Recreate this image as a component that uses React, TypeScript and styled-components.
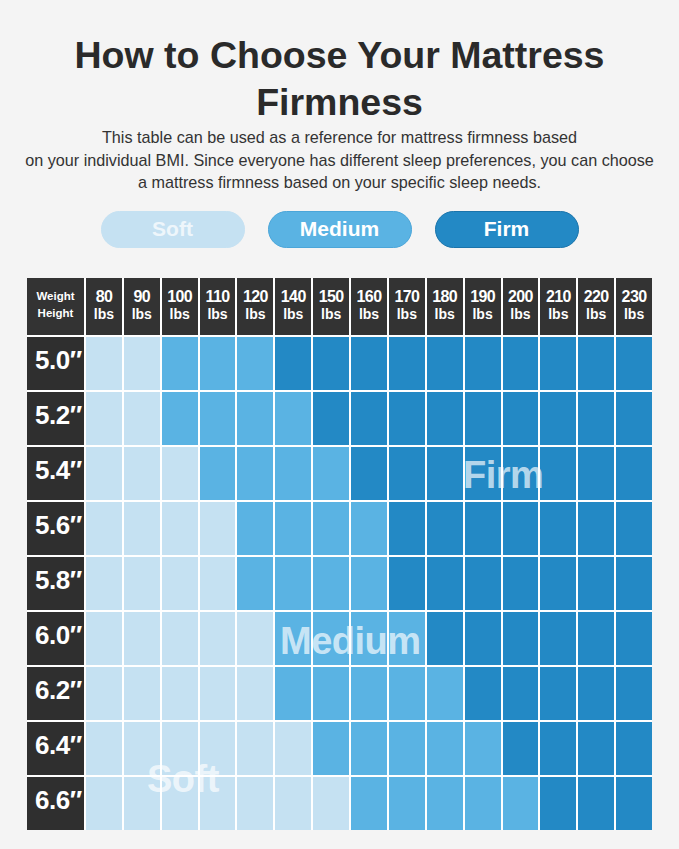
import React from "react";
import styled, { createGlobalStyle } from "styled-components";

const GlobalStyle = createGlobalStyle`
  html, body { margin: 0; padding: 0; background: #f4f4f4; }
  body { font-family: "Liberation Sans", Arial, Helvetica, sans-serif; }
`;

const SOFT = "#c5e1f2";
const MEDIUM = "#5ab3e3";
const FIRM = "#2389c5";

const Page = styled.div`
  width: 679px;
  min-height: 849px;
  padding-top: 32px;
  box-sizing: border-box;
  display: flex;
  flex-direction: column;
  align-items: center;
`;

const Title = styled.h1`
  margin: 0;
  font-size: 37.5px;
  line-height: 47px;
  font-weight: 700;
  color: #2a2a2a;
  text-align: center;
`;

const Subtitle = styled.p`
  margin: 0;
  font-size: 16.2px;
  line-height: 22.5px;
  color: #333;
  text-align: center;
`;

const PillRow = styled.div`
  display: flex;
  gap: 23px;
  margin-top: 17px;
`;

const Pill = styled.div<{ $bg: string; $border: string; $fg: string }>`
  width: 144px;
  height: 37px;
  box-sizing: border-box;
  border-radius: 19px;
  background: ${(p) => p.$bg};
  border: 1px solid ${(p) => p.$border};
  color: ${(p) => p.$fg};
  font-size: 21px;
  font-weight: 700;
  display: flex;
  align-items: center;
  justify-content: center;
`;

const TableWrap = styled.div`
  position: relative;
  margin-top: 30px;
`;

const Grid = styled.div`
  width: 625px;
  display: grid;
  grid-template-columns: 57px repeat(15, 1fr);
  grid-template-rows: 57px repeat(9, 53px);
  gap: 2px;
  background: #ffffff;
`;

const HeadCell = styled.div`
  background: #333333;
  color: #fff;
  font-weight: 700;
  display: flex;
  flex-direction: column;
  align-items: center;
  justify-content: center;
  padding-bottom: 2px;
`;

const CornerText = styled.span`
  font-size: 11.5px;
  line-height: 17px;
`;

const Num = styled.span`
  font-size: 16px;
  line-height: 19px;
  letter-spacing: -0.6px;
`;

const Unit = styled.span`
  font-size: 14px;
  line-height: 17px;
`;

const RowLabel = styled.div`
  background: #2f2f2f;
  color: #fff;
  font-weight: 700;
  font-size: 26px;
  display: flex;
  align-items: center;
  padding: 0 0 5px 8px;
  box-sizing: border-box;
  letter-spacing: -0.5px;
`;

const Cell = styled.div<{ $bg: string }>`
  background: ${(p) => p.$bg};
`;

const Overlay = styled.span<{ $x: number; $y: number }>`
  position: absolute;
  left: ${(p) => p.$x}px;
  top: ${(p) => p.$y}px;
  font-size: 38px;
  line-height: 1;
  font-weight: 700;
  color: rgba(255, 255, 255, 0.68);
  pointer-events: none;
  letter-spacing: -0.5px;
`;

const weights = [80, 90, 100, 110, 120, 140, 150, 160, 170, 180, 190, 200, 210, 220, 230];

const rows: { h: string; m: number; f: number }[] = [
  { h: "5.0", m: 2, f: 5 },
  { h: "5.2", m: 2, f: 6 },
  { h: "5.4", m: 3, f: 7 },
  { h: "5.6", m: 4, f: 8 },
  { h: "5.8", m: 4, f: 8 },
  { h: "6.0", m: 5, f: 9 },
  { h: "6.2", m: 5, f: 10 },
  { h: "6.4", m: 6, f: 11 },
  { h: "6.6", m: 7, f: 12 },
];

export default function App() {
  return (
    <>
      <GlobalStyle />
      <Page>
        <Title>
          How to Choose Your Mattress
          <br />
          Firmness
        </Title>
        <Subtitle>
          This table can be used as a reference for mattress firmness based
          <br />
          on your individual BMI. Since everyone has different sleep preferences, you can choose
          <br />
          a mattress firmness based on your specific sleep needs.
        </Subtitle>
        <PillRow>
          <Pill $bg={SOFT} $border={SOFT} $fg="#eef6fb">Soft</Pill>
          <Pill $bg={MEDIUM} $border="#4ba6d9" $fg="#ffffff">Medium</Pill>
          <Pill $bg={FIRM} $border="#1a74ab" $fg="#ffffff">Firm</Pill>
        </PillRow>
        <TableWrap>
          <Grid>
            <HeadCell>
              <CornerText>Weight</CornerText>
              <CornerText>Height</CornerText>
            </HeadCell>
            {weights.map((w) => (
              <HeadCell key={w}>
                <Num>{w}</Num>
                <Unit>lbs</Unit>
              </HeadCell>
            ))}
            {rows.map((r) => (
              <React.Fragment key={r.h}>
                <RowLabel>{r.h}″</RowLabel>
                {weights.map((w, i) => (
                  <Cell key={w} $bg={i >= r.f ? FIRM : i >= r.m ? MEDIUM : SOFT} />
                ))}
              </React.Fragment>
            ))}
          </Grid>
          <Overlay $x={436} $y={178}>Firm</Overlay>
          <Overlay $x={253} $y={344}>Medium</Overlay>
          <Overlay $x={120} $y={482}>Soft</Overlay>
        </TableWrap>
      </Page>
    </>
  );
}
